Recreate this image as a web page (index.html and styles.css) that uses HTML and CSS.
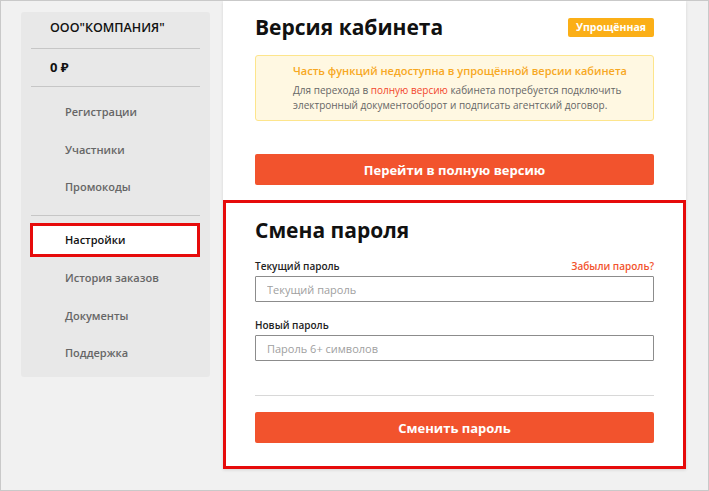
FILE: index.html
```html
<html>
<head>
    <title>Настройки</title>
    <link rel="stylesheet" href="styles.css">
</head>
<body>
    <div class="frame">
        <aside class="sidebar">
            <div class="company">ООО"КОМПАНИЯ"</div>
            <div class="balance">0 ₽</div>
            <ul class="menu">
                <li><a href="#">Регистрации</a></li>
                <li><a href="#">Участники</a></li>
                <li><a href="#">Промокоды</a></li>
            </ul>
            <ul class="menu menu-last">
                <li><a href="#" class="active">Настройки</a></li>
                <li><a href="#">История заказов</a></li>
                <li><a href="#">Документы</a></li>
                <li><a href="#">Поддержка</a></li>
            </ul>
        </aside>
        <main class="content">
            <section class="card">
                <div class="card-head">
                    <h2>Версия кабинета</h2>
                    <span class="badge">Упрощённая</span>
                </div>
                <div class="notice">
                    <h4>Часть функций недоступна в упрощённой версии кабинета</h4>
                    <p>Для перехода в <a href="#">полную версию</a> кабинета потребуется подключить электронный документооборот и подписать агентский договор.</p>
                </div>
                <button class="btn btn-top">Перейти в полную версию</button>
            </section>
            <section class="card card-marked">
                <h2>Смена пароля</h2>
                <div class="field-label">
                    <label>Текущий пароль</label>
                    <a href="#">Забыли пароль?</a>
                </div>
                <input type="password" placeholder="Текущий пароль">
                <div class="field-label field-second">
                    <label>Новый пароль</label>
                </div>
                <input type="password" placeholder="Пароль 6+ символов">
                <hr>
                <button class="btn">Сменить пароль</button>
            </section>
        </main>
    </div>
</body>
</html>
```

FILE: styles.css
```css
body { margin: 0; font-family: "Open Sans", "Noto Sans", sans-serif; }
.frame { width: 709px; height: 491px; box-sizing: border-box; border: 1px solid #c9c9c9; background: #f1f1f1; display: flex; align-items: flex-start; overflow: hidden; }

.sidebar { width: 189px; margin: 11px 0 0 20px; background: #e8e8e8; border-radius: 3px; padding-bottom: 5px; }
.company { padding: 8px 0 12px 19px; line-height: 16px; font-size: 12.5px; font-weight: 600; color: #111; margin: 0 10px; border-bottom: 1px solid #c6c6c6; }
.balance { padding: 10px 0 11px 19px; line-height: 16px; font-size: 13px; font-weight: 700; color: #111; margin: 0 10px; border-bottom: 1px solid #c6c6c6; }
.menu { list-style: none; margin: 0 10px; padding: 6px 0 9px; border-bottom: 1px solid #c6c6c6; }
.menu-last { border-bottom: none; padding-bottom: 0; }
.menu li { height: 37.5px; display: flex; align-items: center; }
.menu a { display: block; padding-left: 34px; font-size: 11px; font-weight: 600; color: #666; text-decoration: none; }
.menu a.active { width: 164px; margin-left: 2px; box-sizing: border-box; padding-left: 32px; line-height: 28px; background: #fff; color: #111; outline: 3px solid #e60a0a; }

.content { width: 463px; margin-left: 13px; background: #fff; box-shadow: 0 1px 3px rgba(0,0,0,0.12); }
.card { padding: 13px 32px 15px 32px; }
.card h2 { margin: 0; font-size: 21px; font-weight: 700; color: #111; line-height: 26px; }
.card-head { display: flex; justify-content: space-between; align-items: center; }
.badge { background: #fbaf17; color: #fff; font-size: 10.5px; font-weight: 700; padding: 0 8px; line-height: 19px; border-radius: 2px; margin-top: 1px; }
.notice { margin-top: 15px; background: #fff8e2; border: 1px solid #fde58c; border-radius: 3px; padding: 7px 12px 7px 37px; }
.notice h4 { margin: 0 0 5px; font-size: 11px; font-weight: 600; color: #f7a823; }
.notice p { margin: 0; font-size: 10px; line-height: 15px; color: #666; }
.notice a { color: #f2472d; text-decoration: none; }
.btn { display: block; width: 100%; height: 31px; border: none; border-radius: 2px; background: #f2532d; color: #fff; font-family: inherit; font-size: 13px; font-weight: 700; cursor: pointer; }
.btn-top { margin-top: 33px; }

.card-marked { border: 3px solid #e60a0a; padding: 14px 29px 23px 29px; }
.field-label { display: flex; justify-content: space-between; margin-top: 16px; font-size: 10px; font-weight: 600; color: #222; line-height: 14px; }
.field-second { margin-top: 16px; }
.field-label + input { margin-top: 3px; }
.field-label a { color: #f2532d; text-decoration: none; }
.card-marked input { display: block; width: 100%; box-sizing: border-box; height: 26px; border: 1px solid #8c8c8c; border-radius: 1px; padding: 0 11px; font-family: inherit; font-size: 11px; }
.card-marked input::placeholder { color: #a0a0a0; }
.card-marked hr { border: none; border-top: 1px solid #d8d8d8; margin: 34px 0 16px; }
```
